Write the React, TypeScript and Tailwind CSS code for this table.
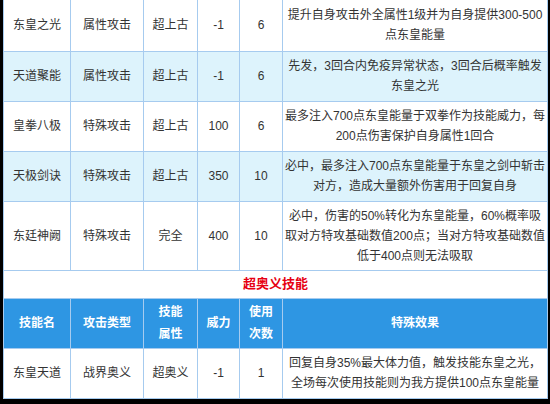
import React from "react"

interface SkillRow {
  name: string
  type: string
  attr: string
  power: string
  uses: string
  effect: string[]
  tinted: boolean
  height: string
}

const skills: SkillRow[] = [
  {
    name: "东皇之光",
    type: "属性攻击",
    attr: "超上古",
    power: "-1",
    uses: "6",
    effect: ["提升自身攻击外全属性1级并为自身提供300-500", "点东皇能量"],
    tinted: false,
    height: "h-[51px]",
  },
  {
    name: "天道聚能",
    type: "属性攻击",
    attr: "超上古",
    power: "-1",
    uses: "6",
    effect: ["先发，3回合内免疫异常状态，3回合后概率触发", "东皇之光"],
    tinted: true,
    height: "h-[50px]",
  },
  {
    name: "皇拳八极",
    type: "特殊攻击",
    attr: "超上古",
    power: "100",
    uses: "6",
    effect: ["最多注入700点东皇能量于双拳作为技能威力，每", "200点伤害保护自身属性1回合"],
    tinted: false,
    height: "h-[50px]",
  },
  {
    name: "天极剑诀",
    type: "特殊攻击",
    attr: "超上古",
    power: "350",
    uses: "10",
    effect: ["必中，最多注入700点东皇能量于东皇之剑中斩击", "对方，造成大量额外伤害用于回复自身"],
    tinted: true,
    height: "h-[50px]",
  },
  {
    name: "东廷神阙",
    type: "特殊攻击",
    attr: "完全",
    power: "400",
    uses: "10",
    effect: [
      "必中，伤害的50%转化为东皇能量，60%概率吸",
      "取对方特攻基础数值200点；当对方特攻基础数值",
      "低于400点则无法吸取",
    ],
    tinted: false,
    height: "h-[69px]",
  },
]

const cell = "border border-[#a6cbef] text-center align-middle p-0"

function Effect({ lines }: { lines: string[] }) {
  return (
    <div className="leading-[20px] whitespace-nowrap">
      {lines.map((line, i) => (
        <div key={i}>{line}</div>
      ))}
    </div>
  )
}

export default function App() {
  return (
    <div className="w-[550px] h-[404px] bg-black pl-[3px] pr-[3px] overflow-hidden">
      <table className="table-fixed border-collapse w-[544px] bg-white text-[12px] text-[#333] font-['Liberation_Sans','Noto_Sans_CJK_SC',sans-serif]">
        <colgroup>
          <col className="w-[67px]" />
          <col className="w-[73px]" />
          <col className="w-[54px]" />
          <col className="w-[42px]" />
          <col className="w-[43px]" />
          <col className="w-[265px]" />
        </colgroup>
        <tbody>
          {skills.map((s, idx) => (
            <tr key={s.name} className={`${s.height} ${s.tinted ? "bg-[#ddf3fc]" : "bg-white"}`}>
              <td className={`${cell} ${idx === 0 ? "border-t-0" : ""}`}>{s.name}</td>
              <td className={`${cell} ${idx === 0 ? "border-t-0" : ""}`}>{s.type}</td>
              <td className={`${cell} ${idx === 0 ? "border-t-0" : ""}`}>{s.attr}</td>
              <td className={`${cell} ${idx === 0 ? "border-t-0" : ""}`}>{s.power}</td>
              <td className={`${cell} ${idx === 0 ? "border-t-0" : ""}`}>{s.uses}</td>
              <td className={`${cell} ${idx === 0 ? "border-t-0" : ""}`}>
                <Effect lines={s.effect} />
              </td>
            </tr>
          ))}

          {/* 超奥义 section title */}
          <tr className="h-[28px]">
            <td colSpan={6} className={`${cell} text-[13px] font-bold text-[#e60012]`}>
              超奥义技能
            </td>
          </tr>

          {/* header */}
          <tr className="h-[50px] bg-[#2e96e3] text-white font-bold">
            <td className={cell}>技能名</td>
            <td className={cell}>攻击类型</td>
            <td className={`${cell} leading-[22px]`}>
              技能
              <br />
              属性
            </td>
            <td className={cell}>威力</td>
            <td className={`${cell} leading-[22px]`}>
              使用
              <br />
              次数
            </td>
            <td className={cell}>特殊效果</td>
          </tr>

          <tr className="h-[50px] bg-white">
            <td className={cell}>东皇天道</td>
            <td className={cell}>战界奥义</td>
            <td className={cell}>超奥义</td>
            <td className={cell}>-1</td>
            <td className={cell}>1</td>
            <td className={cell}>
              <Effect lines={["回复自身35%最大体力值，触发技能东皇之光，", "全场每次使用技能则为我方提供100点东皇能量"]} />
            </td>
          </tr>
        </tbody>
      </table>
    </div>
  )
}
